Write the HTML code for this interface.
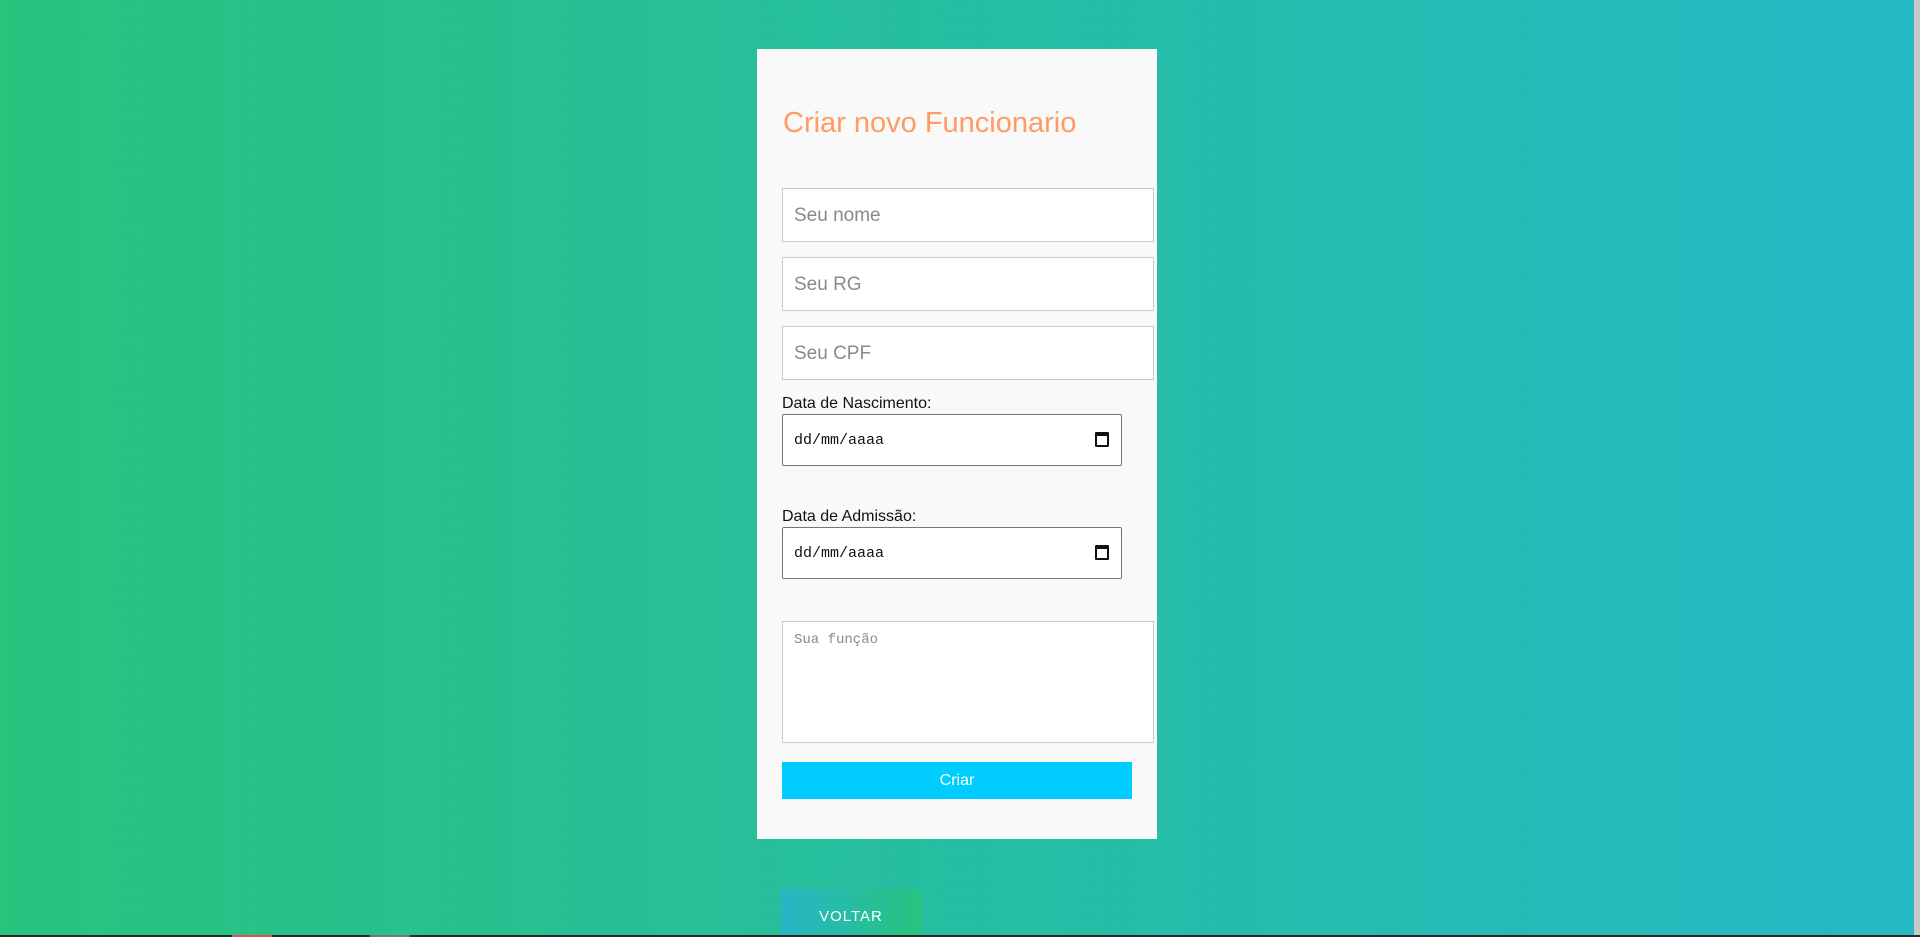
<!DOCTYPE html>
<html><head><meta charset="utf-8"><style>
*{margin:0;padding:0;box-sizing:border-box}
html,body{width:1920px;height:937px;overflow:hidden}
body{position:relative;background:linear-gradient(90deg,#27c47e,#26b8c6);font-family:"Liberation Sans",Arial,sans-serif}
.card{position:absolute;left:757px;top:49px;width:400px;height:790px;background:#f9f9f9}
.abs{position:absolute}
h1{position:absolute;left:783px;top:107px;font-size:29px;font-weight:400;color:#ff9b63;white-space:nowrap}
.in{position:absolute;left:782px;width:372px;height:54px;background:#fff;border:1px solid #c9c9c9;font-size:19px;color:#8a8a8a;padding:17px 0 0 11px;line-height:19px}
.lbl{position:absolute;left:782px;font-size:16px;color:#111}
.date{position:absolute;left:782px;width:340px;height:52px;background:#fff;border:1px solid #767676;border-radius:2px;font-family:"Liberation Mono",monospace;font-size:15px;color:#111;padding:17px 0 0 11px}
.cal{position:absolute;right:12px;top:17px;width:14px;height:15px;border:2px solid #111;border-top-width:4px;border-radius:1px}
.ta{position:absolute;left:782px;top:621px;width:372px;height:122px;background:#fff;border:1px solid #c9c9c9;font-family:"Liberation Mono",monospace;font-size:14px;color:#8a8a8a;padding:10px 0 0 11px}
.btn{position:absolute;left:782px;top:762px;width:350px;height:37px;background:#00ccff;color:#fff;font-size:16px;text-align:center;line-height:37px}
.volt{position:absolute;left:781px;top:889px;width:140px;height:46px;background:linear-gradient(90deg,#27b6c6,#27c47f);color:#fff;font-size:15px;letter-spacing:1px;text-align:center;line-height:56px}
</style></head><body>
<div class="card"></div>
<h1>Criar novo Funcionario</h1>
<div class="in" style="top:188px">Seu nome</div>
<div class="in" style="top:257px">Seu RG</div>
<div class="in" style="top:326px">Seu CPF</div>
<div class="lbl" style="top:395px">Data de Nascimento:</div>
<div class="date" style="top:414px">dd/mm/aaaa<div class="cal"></div></div>
<div class="lbl" style="top:508px">Data de Admissão:</div>
<div class="date" style="top:527px">dd/mm/aaaa<div class="cal"></div></div>
<div class="ta">Sua função</div>
<div class="btn">Criar</div>
<div class="volt">VOLTAR</div>
<div class="abs" style="left:1914px;top:0;width:6px;height:935px;background:#c8c8c8"></div>
<div class="abs" style="left:0;top:935px;width:1920px;height:2px;background:#2b2b2b"></div>
<div class="abs" style="left:232px;top:935px;width:40px;height:2px;background:#e84a4f"></div>
<div class="abs" style="left:370px;top:935px;width:40px;height:2px;background:#777"></div>
</body></html>
